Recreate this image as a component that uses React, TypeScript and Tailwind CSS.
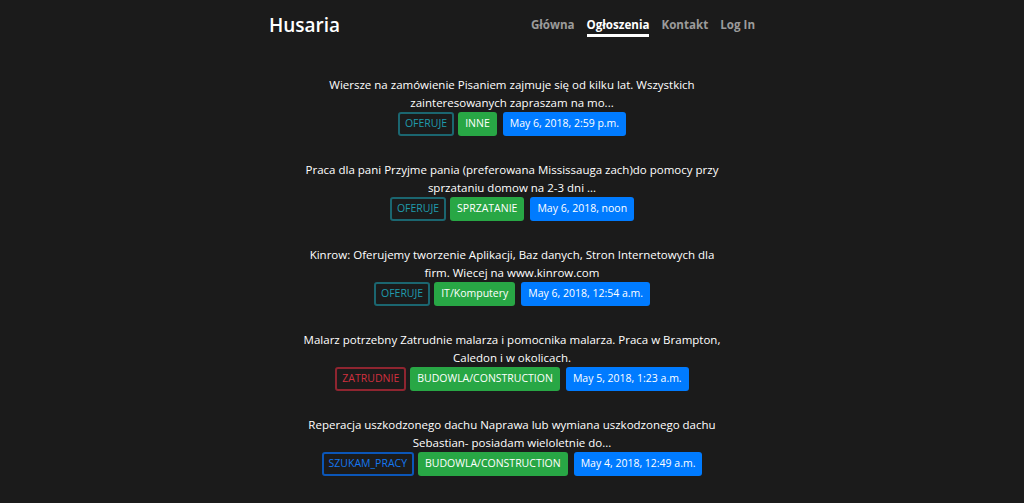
type Kind = "offer" | "hire" | "seek";

const items: { text: string; kind: Kind; label: string; cat: string; date: string }[] = [
  {
    text: "Wiersze na zamówienie Pisaniem zajmuje się od kilku lat. Wszystkich zainteresowanych zapraszam na mo...",
    kind: "offer",
    label: "OFERUJE",
    cat: "INNE",
    date: "May 6, 2018, 2:59 p.m.",
  },
  {
    text: "Praca dla pani Przyjme pania (preferowana Mississauga zach)do pomocy przy sprzataniu domow na 2-3 dni ...",
    kind: "offer",
    label: "OFERUJE",
    cat: "SPRZATANIE",
    date: "May 6, 2018, noon",
  },
  {
    text: "Kinrow: Oferujemy tworzenie Aplikacji, Baz danych, Stron Internetowych dla firm. Wiecej na www.kinrow.com",
    kind: "offer",
    label: "OFERUJE",
    cat: "IT/Komputery",
    date: "May 6, 2018, 12:54 a.m.",
  },
  {
    text: "Malarz potrzebny Zatrudnie malarza i pomocnika malarza. Praca w Brampton, Caledon i w okolicach.",
    kind: "hire",
    label: "ZATRUDNIE",
    cat: "BUDOWLA/CONSTRUCTION",
    date: "May 5, 2018, 1:23 a.m.",
  },
  {
    text: "Reperacja uszkodzonego dachu Naprawa lub wymiana uszkodzonego dachu Sebastian- posiadam wieloletnie do...",
    kind: "seek",
    label: "SZUKAM_PRACY",
    cat: "BUDOWLA/CONSTRUCTION",
    date: "May 4, 2018, 12:49 a.m.",
  },
];

const outline: Record<Kind, string> = {
  offer: "border-[#1b6670] text-[#1f9aab]",
  hire: "border-[#8f2530] text-[#d0303f]",
  seek: "border-[#0b56b8] text-[#1478f0]",
};

export default function App() {
  return (
    <div
      className="bg-[#1b1b1b] text-white min-h-screen"
      style={{ fontFamily: "'Open Sans', sans-serif" }}
    >
      <div className="w-[516px] mx-auto px-[15px]">
        <header className="flex items-center justify-between h-[50px]">
          <div className="text-[19px] leading-[30px] font-semibold text-white">Husaria</div>
          <nav className="flex items-center gap-[12px] text-[11.6px] font-bold">
            <a className="text-[#9b9b9b] leading-[18px] border-b-[3px] border-transparent pt-[3px]">Główna</a>
            <a className="text-white leading-[18px] border-b-[3px] border-white pt-[3px]">Ogłoszenia</a>
            <a className="text-[#9b9b9b] leading-[18px] border-b-[3px] border-transparent pt-[3px]">Kontakt</a>
            <a className="text-[#9b9b9b] leading-[18px] border-b-[3px] border-transparent pt-[3px]">Log In</a>
          </nav>
        </header>

        <main className="pt-[26px] flex flex-col items-center">
          {items.map((it, i) => (
            <div key={i} className="w-[430px] text-center mb-[25px]">
              <p className="text-[11.5px] leading-[18px]">{it.text}</p>
              <div className="flex justify-center items-center h-[24px] text-[10.5px]">
                <span
                  className={`h-[24px] flex items-center px-[5px] border-2 rounded-[3px] bg-[#1b1b1b] ${outline[it.kind]}`}
                >
                  {it.label}
                </span>
                <span className="ml-[4px] h-[24px] flex items-center px-[7px] rounded-[3px] bg-[#28a745] text-white font-medium">
                  {it.cat}
                </span>
                <span className="ml-[6px] h-[24px] flex items-center px-[7px] rounded-[3px] bg-[#007bff] text-white font-medium">
                  {it.date}
                </span>
              </div>
            </div>
          ))}
        </main>
      </div>
    </div>
  );
}
